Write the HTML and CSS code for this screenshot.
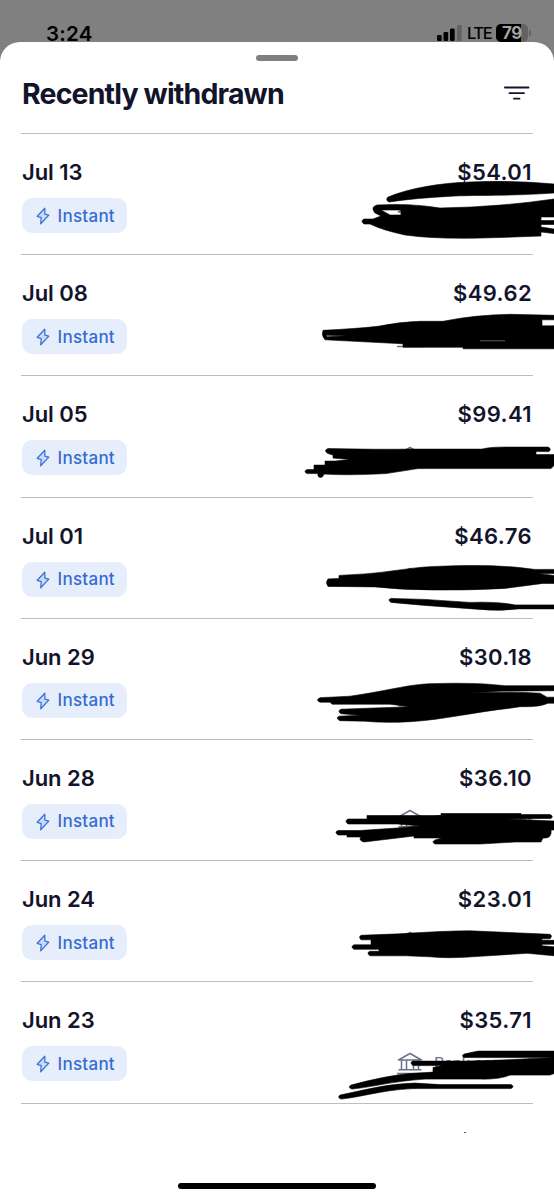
FILE: index.html
```html
<!DOCTYPE html>
<html lang="en">
<head>
<meta charset="utf-8">
<title>Recently withdrawn</title>
<link rel="stylesheet" href="styles.css">
</head>
<body>
<svg class="defs" width="0" height="0">
  <symbol id="bolt" viewBox="0 0 14 18"><path d="M8.8 1.2 1.2 9.3 5.2 10.6 4.7 16.8 12.8 8.1 8.9 7.1Z" fill="#c5dcfa" stroke="#3c6fd3" stroke-width="1.25" stroke-linejoin="round"/></symbol>
  <symbol id="bank" viewBox="0 0 28 24"><path d="M2.5 8 14 1.5 25.5 8ZM5.500 8V17M10.500 8V17M17.500 8V17M22.500 8V17M2.500 17.700H25.500M1 21.500H27" fill="none" stroke="#68728a" stroke-width="1.5" stroke-linejoin="round"/></symbol>
</svg>
<div class="screen">
  <header class="status">
    <span class="time">3:24</span>
    <span class="indicators">
      <svg width="25" height="16" viewBox="0 0 25 16"><rect y="10" width="4.7" height="6" rx="1.2"/><rect x="6.5" y="7" width="4.7" height="9" rx="1.2"/><rect x="13" y="3.5" width="4.7" height="12.5" rx="1.2"/><rect x="20" y="0" width="4.7" height="16" rx="1.2" fill="#626262"/></svg>
      <span class="network">LTE</span>
      <span class="battery">79</span><i class="battery-tip"></i>
    </span>
  </header>
  <main class="sheet">
    <div class="grabber"></div>
    <div class="heading">
      <h1>Recently withdrawn</h1>
      <svg width="26" height="16" viewBox="0 0 26 16"><path d="M.9 1.500H24.500M5.500 7.200H20M10 12.700H15.500" fill="none" stroke="#12142b" stroke-width="1.8" stroke-linecap="round"/></svg>
    </div>
    <ul class="list">
      <li class="row">
        <div class="line"><span class="date">Jul 13</span><span class="amount">$54.01</span></div>
        <div class="line"><span class="pill"><svg><use href="#bolt"/></svg>Instant</span><span class="account"><svg><use href="#bank"/></svg>Bank account</span></div>
        <svg class="scribble" viewBox="300 133 254 121"><path d="M388 197C410 188 440 183 470 182Q510 180 554 184V193C510 196 480 195 455 196Q415 198 389 202Q385 200 388 197ZM364 219H373L381 216 375 213Q370 207 377 205Q410 203 440 208Q500 207 554 199V217H541V220.500H554V224.500H541V227L554 229V233.500L541 232V236L500 237.500Q440 240 405 235Q382 230 370 224H364Q360 221 364 219ZM381 210 390 215H401V210Z" fill-rule="evenodd"/></svg>
      </li>
      <li class="row">
        <div class="line"><span class="date">Jul 08</span><span class="amount">$49.62</span></div>
        <div class="line"><span class="pill"><svg><use href="#bolt"/></svg>Instant</span><span class="account"><svg><use href="#bank"/></svg>Bank account</span></div>
        <svg class="scribble" viewBox="300 254.200 254 121"><path d="M323 330.500Q355 329 378 326.500 400 322 420 321.500H443Q475 315 510 314.500L554 315.500V320H542V326H554V349H463V347.500H403V344L325 340Q321 336 323 330.500ZM326 335.500 346 336 327 337Z" fill-rule="evenodd"/><path class="gap" d="M480 341H505"/></svg>
      </li>
      <li class="row">
        <div class="line"><span class="date">Jul 05</span><span class="amount">$99.41</span></div>
        <div class="line"><span class="pill"><svg><use href="#bolt"/></svg>Instant</span><span class="account"><svg><use href="#bank"/></svg>Bank account</span></div>
        <svg class="scribble" viewBox="300 375.400 254 121"><path d="M328 449Q380 450 410 449.500H482Q490 447 515 447.500H548Q552 449 549 452H536V455H554V466L551 469H418L386 474Q350 476 324 474.500 323 478 320 478 317 477 318 474H307Q303 472 307 470H314V465.500H325V461.500H335L350 460 333 458.500V455.500L328 454Q323 451 328 449Z"/></svg>
      </li>
      <li class="row">
        <div class="line"><span class="date">Jul 01</span><span class="amount">$46.76</span></div>
        <div class="line"><span class="pill"><svg><use href="#bolt"/></svg>Instant</span><span class="account"><svg><use href="#bank"/></svg>Bank account</span></div>
        <svg class="scribble" viewBox="300 496.600 254 121"><path d="M328 578.500 339 578V575L365 573.500C395 571 410 567 435 566Q495 563 535 569H554V573H538L554 575V583H543L505 588Q430 592 375 586.500L328 586Q325 582 328 578.500ZM391 598 425 599 470 602Q498 601 515 604.500H554V608.500H518Q500 611 480 609L425 605 391 602Q387 599 391 598Z"/></svg>
      </li>
      <li class="row">
        <div class="line"><span class="date">Jun 29</span><span class="amount">$30.18</span></div>
        <div class="line"><span class="pill"><svg><use href="#bolt"/></svg>Instant</span><span class="account"><svg><use href="#bank"/></svg>Bank account</span></div>
        <svg class="scribble" viewBox="300 617.800 254 121"><path d="M320 697.500 350 696C385 691 410 684 430 683.500Q475 682 505 685.500H554V690.500L500 691 466 693Q510 691 540 693L547 697H554V703H548Q540 707 520 706.500L510 708C480 711 440 720 410 721.500Q385 723 365 721L340 720.500Q335 718 339 716L360 715 341 713.500Q337 711 341 709L410 706.500 390 704H332L330 702H320Q315 700 320 697.500Z"/></svg>
      </li>
      <li class="row">
        <div class="line"><span class="date">Jun 28</span><span class="amount">$36.10</span></div>
        <div class="line"><span class="pill"><svg><use href="#bolt"/></svg>Instant</span><span class="account"><svg><use href="#bank"/></svg>Bank account</span></div>
        <svg class="scribble" viewBox="300 739 254 121"><path d="M348 819H367V815.500H441V813.500H521V814.500H550Q554 816 551 818.500H538L506 819 554 821V830H551Q552 837 546 838H543L541 842H515L480 844H435Q431 842 435 840L442 838H414V836L364 842Q358 840 361 837H347V835H338Q334 832 338 830.500H360L397 828 420 826 397 824H348Q344 821 348 819Z"/></svg>
      </li>
      <li class="row">
        <div class="line"><span class="date">Jun 24</span><span class="amount">$23.01</span></div>
        <div class="line"><span class="pill"><svg><use href="#bolt"/></svg>Instant</span><span class="account"><svg><use href="#bank"/></svg>Bank account</span></div>
        <svg class="scribble" viewBox="300 860.200 254 121"><path d="M361 935.500 400 934Q445 931 470 931L550 934.500Q553 936 550 939H542V940.500H554V944.500H542V946L554 947V956L527 953.500 480 956.500Q450 959 430 957L406 956H370Q366 953 370 951.500H379V949.500H354Q350 947 354 945H371V940H361Q358 937 361 935.500Z"/></svg>
      </li>
      <li class="row">
        <div class="line"><span class="date">Jun 23</span><span class="amount">$35.71</span></div>
        <div class="line"><span class="pill"><svg><use href="#bolt"/></svg>Instant</span><span class="account"><svg><use href="#bank"/></svg>Bank account</span></div>
        <svg class="scribble" viewBox="300 981.400 254 121"><path d="M413 1061.500H466L500 1060.500 554 1058V1074L550 1075.500H510Q500 1080 480 1079.500H425C390 1082 375 1087 352 1089.500Q347 1088 351 1085.500 386 1076 410 1074L433 1072.500V1068L442 1066H413Q409 1063 413 1061.500ZM464 1054.500 478 1051.500H554V1058H464Q461 1056 464 1054.500ZM340 1095.500C370 1089 390 1084 415 1083.500L440 1085H511Q515 1087 511 1089H425C390 1088 365 1097 341 1099.500Q337 1098 340 1095.500Z"/></svg>
      </li>
    </ul>
    <div class="next"><i></i></div>
    <div class="home"></div>
  </main>
</div>
</body>
</html>
```
FILE: styles.css
```css
* { box-sizing: border-box; }
body { margin: 0; font-family: Inter, "Liberation Sans", sans-serif; color: #12142b; }
.defs { position: absolute; }
.screen { width: 554px; height: 1200px; overflow: hidden; background: #808080; display: flex; flex-direction: column; }
.status { height: 42px; flex: none; padding: 24px 23px 0 46px; display: flex; justify-content: space-between; align-items: flex-start; color: #000; }
.time { font-size: 20.5px; line-height: 20px; font-weight: 600; letter-spacing: .2px; }
.indicators { display: flex; align-items: center; height: 18px; }
.network { font-size: 16.5px; line-height: 18px; margin-left: 5px; width: 29px; letter-spacing: -1.4px; font-weight: 500; }
.battery { width: 32px; height: 18px; border-radius: 5px; background: linear-gradient(90deg, #000 79%, #626262 79%); color: #a3a3a3; font-size: 17px; line-height: 18px; font-weight: 700; text-align: center; letter-spacing: -.4px; }
.battery-tip { width: 2px; height: 6px; border-radius: 0 2px 2px 0; background: #626262; margin-left: 1px; }
.sheet { flex: 1; background: #fff; border-radius: 20px 20px 0 0; padding: 13px 21px 0; display: flex; flex-direction: column; }
.grabber { width: 42px; height: 6px; border-radius: 3px; background: #808080; margin: 0 auto; flex: none; }
.heading { height: 72px; flex: none; padding: 0 3px 7px 1px; display: flex; align-items: center; justify-content: space-between; }
h1 { margin: 0; font-size: 28.5px; line-height: 34px; font-weight: 700; letter-spacing: -.85px; }
.list { list-style: none; margin: 0; padding: 0; border-bottom: 1px solid #bdbdbd; }
.row { position: relative; height: 121.2px; border-top: 1px solid #bdbdbd; padding-top: 25px; display: flex; flex-direction: column; gap: 12px; }
.line { display: flex; align-items: center; justify-content: space-between; font-size: 22px; line-height: 27px; font-weight: 600; padding: 0 1px; }
.date { letter-spacing: -.05px; }
.amount { letter-spacing: .4px; }
.pill { display: flex; align-items: center; gap: 8px; width: 105px; height: 35px; margin-left: -.4px; padding: 1px 0 0 14px; border-radius: 10px; background: #e6eefc; color: #366bd0; font-size: 17px; font-weight: 500; letter-spacing: .25px; }
.pill svg { width: 14px; height: 18px; }
.account { display: flex; align-items: center; gap: 10px; color: #68728a; font-size: 16px; font-weight: 400; letter-spacing: -.43px; }
.account svg { width: 28px; height: 24px; }
.scribble { position: absolute; top: -1px; right: -21px; width: 254px; height: 121px; fill: #000; stroke: #000; stroke-width: .6px; stroke-linejoin: round; }
.gap { stroke: #999; }
.next { height: 29px; padding: 28px 67px 0 0; display: flex; justify-content: flex-end; flex: none; }
.next i { width: 2px; height: 1px; background: #555; }
.home { width: 198px; height: 6px; border-radius: 3px; background: #000; margin: 50px auto 0; flex: none; }
```
